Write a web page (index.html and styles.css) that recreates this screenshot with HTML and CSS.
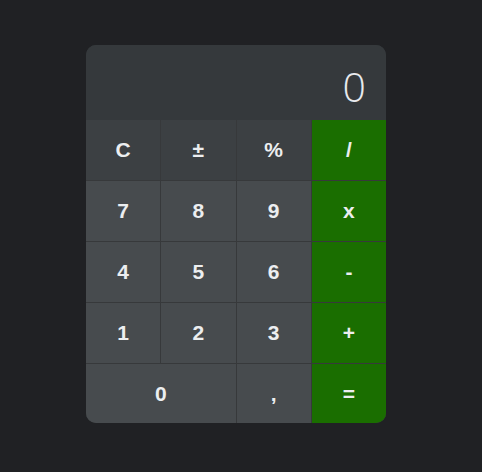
FILE: index.html
```html
<!DOCTYPE html>
<html>
<head>
<meta charset="utf-8">
<link rel="stylesheet" href="styles.css">
</head>
<body>
<div class="page">
  <div class="calc">
    <div class="display">0</div>
    <div class="keys">
      <div class="key fn">C</div>
      <div class="key fn">±</div>
      <div class="key fn">%</div>
      <div class="key op">/</div>
      <div class="key">7</div>
      <div class="key">8</div>
      <div class="key">9</div>
      <div class="key op">x</div>
      <div class="key">4</div>
      <div class="key">5</div>
      <div class="key">6</div>
      <div class="key op">-</div>
      <div class="key">1</div>
      <div class="key">2</div>
      <div class="key">3</div>
      <div class="key op">+</div>
      <div class="key wide">0</div>
      <div class="key">,</div>
      <div class="key op">=</div>
    </div>
  </div>
</div>
</body>
</html>
```
FILE: styles.css
```css
html, body {
  margin: 0;
  padding: 0;
  background: #202124;
}
.page {
  padding: 45px 0 0 86px;
}
.calc {
  width: 300px;
  border-radius: 10px;
  overflow: hidden;
  background: #35393c;
}
.display {
  height: 75px;
  box-sizing: border-box;
  background: #35393c;
  display: flex;
  justify-content: flex-end;
  align-items: center;
  padding: 7px 20px 0 0;
  font-family: "Open Sans", sans-serif;
  font-weight: 300;
  font-size: 41px;
  color: #e8eaed;
}
.keys {
  display: grid;
  grid-template-columns: repeat(4, 1fr);
  grid-template-rows: repeat(4, 60px) 59px;
  gap: 1px;
  background: #37393b;
}
.key {
  display: flex;
  align-items: center;
  justify-content: center;
  background: #474b4e;
  font-family: "Liberation Sans", Arial, sans-serif;
  font-weight: bold;
  font-size: 21px;
  color: #eceef0;
}
.key.fn {
  background: #3c4043;
}
.key.op {
  background: #1a6e00;
}
.key.wide {
  grid-column: span 2;
}
```
